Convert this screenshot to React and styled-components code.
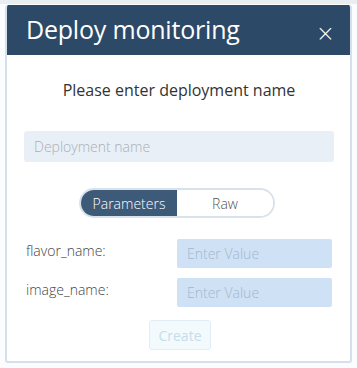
import React from "react";
import styled, { createGlobalStyle } from "styled-components";

const Global = createGlobalStyle`
  html, body { margin: 0; padding: 0; background: #f6f8fa; }
  body { font-family: "Open Sans", "Noto Sans", sans-serif; }
  * { box-sizing: border-box; }
`;

const Page = styled.div`
  width: 357px;
  height: 368px;
  padding: 5px 5px 0 5px;
  background: linear-gradient(#e9eef3 0 4px, #fbfcfd 4px);
  overflow: hidden;
`;

const Modal = styled.div`
  width: 347px;
  height: 358px;
  background: #ffffff;
  border: 2px solid #d6e0ea;
  border-top: none;
  border-radius: 3px;
  display: flex;
  flex-direction: column;
  overflow: hidden;
`;

const Header = styled.div`
  height: 50px;
  margin: 0 -2px;
  background: #2c4968;
  display: flex;
  align-items: center;
  justify-content: space-between;
  padding: 0 17px 0 21px;
  border-radius: 3px 3px 0 0;
`;

const Title = styled.h1`
  margin: 0;
  font-size: 25px;
  font-weight: 400;
  color: #ffffff;
  letter-spacing: -0.2px;
  padding-bottom: 2px;
`;

const Close = styled.span`
  color: #ffffff;
  font-size: 23px;
  line-height: 1;
  font-family: "DejaVu Sans", sans-serif;
  font-weight: 300;
  transform: translateY(3px);
`;

const Body = styled.div`
  flex: 1;
  display: flex;
  flex-direction: column;
  padding: 23px 16px 0 17px;
`;

const Prompt = styled.p`
  margin: 0;
  text-align: center;
  font-size: 16px;
  color: #333333;
  line-height: 24px;
`;

const NameInput = styled.input`
  margin-top: 29px;
  height: 31px;
  width: 100%;
  border: none;
  border-radius: 3px;
  background: #e9eff6;
  padding: 0 10px;
  font-family: inherit;
  font-size: 14px;
  font-weight: 300;
  color: #333;
  &::placeholder { color: #a7afb8; }
`;

const Toggle = styled.div`
  margin: 26px auto 0;
  width: 196px;
  height: 30px;
  border: 2px solid #d8e2ec;
  border-radius: 15px;
  display: flex;
  overflow: hidden;
  transform: translateX(-2px);
`;

const Segment = styled.div`
  flex: 1;
  display: flex;
  align-items: center;
  justify-content: center;
  font-size: 14px;
  font-weight: 300;
  color: ${(p) => (p.$active ? "#ffffff" : "#555555")};
  background: ${(p) => (p.$active ? "#3e5a79" : "#ffffff")};
`;

const Row = styled.div`
  display: flex;
  align-items: center;
  justify-content: space-between;
  margin-top: ${(p) => p.$mt}px;
  padding-left: 2px;
  padding-right: 2px;
`;

const Label = styled.span`
  font-size: 14px;
  font-weight: 300;
  color: #444444;
  transform: translateY(-3px);
`;

const ValueInput = styled.input`
  width: 155px;
  height: 29px;
  border: none;
  border-radius: 2px;
  background: #cfe2f5;
  padding: 0 10px;
  font-family: inherit;
  font-size: 14px;
  font-weight: 300;
  &::placeholder { color: #9fb7ce; }
`;

const CreateButton = styled.button`
  margin: 13px auto 0;
  width: 62px;
  height: 30px;
  border: 1px solid #e1eef5;
  border-radius: 3px;
  background: #f3fafd;
  color: #c3dde9;
  font-family: inherit;
  font-size: 14px;
  font-weight: 400;
  transform: translateX(1px);
`;

export default function App() {
  return (
    <>
      <Global />
      <Page>
        <Modal>
          <Header>
            <Title>Deploy monitoring</Title>
            <Close>×</Close>
          </Header>
          <Body>
            <Prompt>Please enter deployment name</Prompt>
            <NameInput placeholder="Deployment name" />
            <Toggle>
              <Segment $active>Parameters</Segment>
              <Segment>Raw</Segment>
            </Toggle>
            <Row $mt={21}>
              <Label>flavor_name:</Label>
              <ValueInput placeholder="Enter Value" />
            </Row>
            <Row $mt={10}>
              <Label>image_name:</Label>
              <ValueInput placeholder="Enter Value" />
            </Row>
            <CreateButton>Create</CreateButton>
          </Body>
        </Modal>
      </Page>
    </>
  );
}
